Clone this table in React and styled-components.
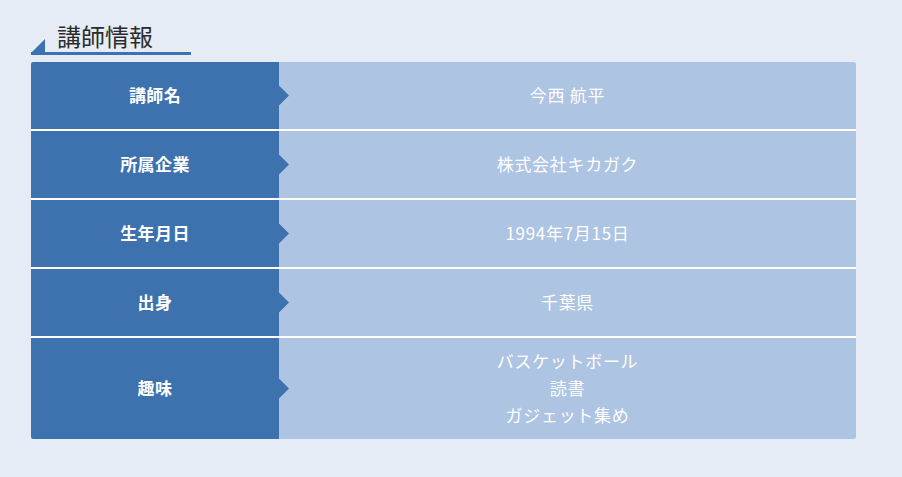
import React from "react";
import styled, { createGlobalStyle } from "styled-components";

const Global = createGlobalStyle`
  html, body { margin: 0; padding: 0; background: #e5ecf5; }
  body { font-family: "Noto Sans", "Noto Sans CJK JP", sans-serif; }
`;

const Page = styled.div`
  padding: 22px 0 0 31px;
  width: 825px;
`;

const Heading = styled.div`
  display: flex;
  align-items: flex-end;
  width: 160px;
  height: 30px;
  border-bottom: 3px solid #3d72b0;
`;

const Corner = styled.span`
  width: 14px;
  height: 14px;
  margin-bottom: -1px;
  background: #3d72b0;
  clip-path: polygon(100% 0, 100% 100%, 0 100%);
  flex: none;
`;

const Title = styled.h2`
  margin: 0 0 0 12px;
  font-family: "Noto Sans CJK JP", sans-serif;
  font-weight: 400;
  font-size: 24px;
  line-height: 30px;
  color: #2b2b2b;
  position: relative;
  top: -1px;
`;

const Table = styled.div`
  margin-top: 7px;
  display: flex;
  flex-direction: column;
  gap: 2px;
  border-radius: 2px;
  overflow: hidden;
  background: #ffffff;
`;

const Row = styled.div`
  display: grid;
  grid-template-columns: 248px 1fr;
  min-height: ${(p) => p.$h}px;
`;

const Label = styled.div`
  position: relative;
  display: flex;
  align-items: center;
  justify-content: center;
  padding-bottom: 3px;
  background: #3d72ae;
  color: #ffffff;
  font-family: "Noto Sans CJK JP", sans-serif;
  font-weight: 700;
  font-size: 17px;
  letter-spacing: 0.4px;
  &::after {
    content: "";
    position: absolute;
    right: -10px;
    top: 50%;
    margin-top: -10px;
    width: 10px;
    height: 20px;
    background: #3d72ae;
    clip-path: polygon(0 0, 100% 50%, 0 100%);
    z-index: 1;
  }
`;

const Value = styled.div`
  display: flex;
  flex-direction: column;
  align-items: center;
  justify-content: center;
  background: #adc4e3;
  color: #ffffff;
  font-family: "Noto Sans CJK JP", sans-serif;
  font-size: 17px;
  line-height: 27px;
  letter-spacing: 0.7px;
  padding: 8px 0 11px;
`;

const rows = [
  { label: "講師名", value: ["今西 航平"] },
  { label: "所属企業", value: ["株式会社キカガク"] },
  { label: "生年月日", value: ["1994年7月15日"] },
  { label: "出身", value: ["千葉県"] },
  { label: "趣味", value: ["バスケットボール", "読書", "ガジェット集め"], h: 101 },
];

export default function App() {
  return (
    <Page>
      <Global />
      <Heading>
        <Corner />
        <Title>講師情報</Title>
      </Heading>
      <Table>
        {rows.map((r) => (
          <Row key={r.label} $h={r.h || 67}>
            <Label>{r.label}</Label>
            <Value>
              {r.value.map((v) => (
                <span key={v}>{v}</span>
              ))}
            </Value>
          </Row>
        ))}
      </Table>
    </Page>
  );
}
